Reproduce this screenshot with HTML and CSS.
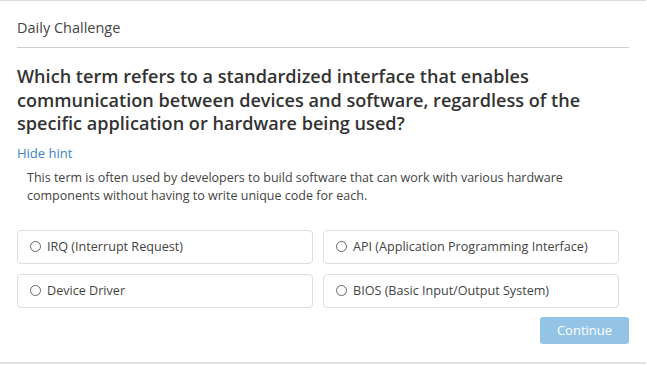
FILE: index.html
```html
<!DOCTYPE html>
<html>
<head>
<meta charset="utf-8">
<link rel="stylesheet" href="styles.css">
</head>
<body>
<div class="card">
  <div class="header">Daily Challenge</div>
  <h1 class="question">Which term refers to a standardized interface that enables communication between devices and software, regardless of the specific application or hardware being used?</h1>
  <a class="hint-toggle">Hide hint</a>
  <p class="hint">This term is often used by developers to build software that can work with various hardware components without having to write unique code for each.</p>
  <div class="options">
    <label class="option"><span class="radio"></span>IRQ (Interrupt Request)</label>
    <label class="option"><span class="radio"></span>API (Application Programming Interface)</label>
    <label class="option"><span class="radio"></span>Device Driver</label>
    <label class="option"><span class="radio"></span>BIOS (Basic Input/Output System)</label>
  </div>
  <div class="actions">
    <button class="continue">Continue</button>
  </div>
</div>
</body>
</html>
```

FILE: styles.css
```css
* { box-sizing: border-box; }
html, body { margin: 0; padding: 0; background: #fff; }
body { font-family: "Open Sans", "Noto Sans", sans-serif; color: #333; }
.card {
  width: 646px;
  height: 364px;
  border-top: 1px solid #dcdcdc;
  border-bottom: 2px solid #e2e2e2;
  padding: 0 17px;
}
.header {
  font-size: 14.5px;
  color: #444;
  height: 47px;
  padding-top: 17px;
  border-bottom: 1px solid #cfcfcf;
}
.question {
  margin: 17px 0 0;
  font-size: 18.1px;
  font-weight: 600;
  line-height: 23.5px;
  color: #333;
}
.hint-toggle {
  display: block;
  margin-top: 8px;
  font-size: 13px;
  line-height: 18px;
  color: #3c84c9;
}
.hint {
  margin: 7px 0 0 10px;
  font-size: 12.5px;
  line-height: 18px;
  color: #444;
}
.options {
  margin: 25px 10px 0 0;
  display: grid;
  grid-template-columns: 1fr 1fr;
  column-gap: 10px;
  row-gap: 10px;
}
.option {
  display: flex;
  align-items: center;
  height: 34px;
  padding-left: 12px;
  border: 1px solid #dedede;
  border-radius: 4px;
  font-size: 12.6px;
  color: #444;
}
.radio {
  width: 11px;
  height: 11px;
  border: 1px solid #666;
  border-radius: 50%;
  margin-right: 6px;
  flex: none;
}
.actions {
  display: flex;
  justify-content: flex-end;
  margin-top: 9px;
}
.continue {
  width: 89px;
  height: 27px;
  border: none;
  border-radius: 3px;
  background: #93c4e6;
  color: #fff;
  font-family: "Open Sans", sans-serif;
  font-size: 13px;
  padding: 0;
}
```
